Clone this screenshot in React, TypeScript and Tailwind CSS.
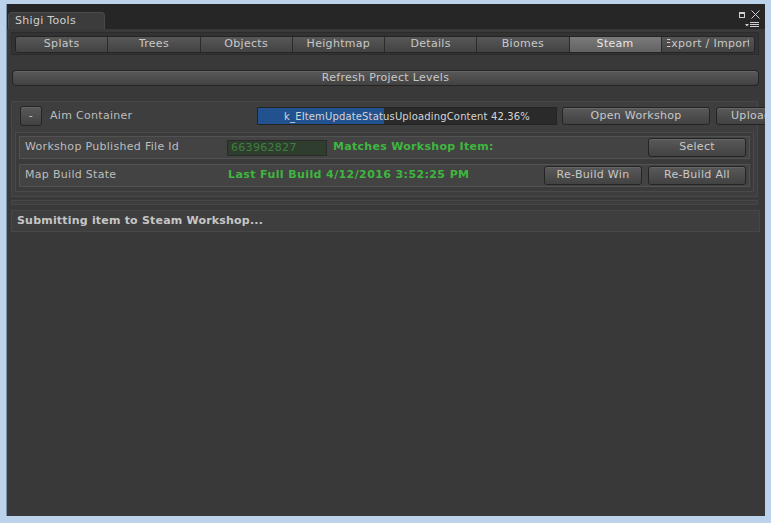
import React from 'react';

const tabs = ['Splats', 'Trees', 'Objects', 'Heightmap', 'Details', 'Biomes', 'Steam', 'Export / Import'];

const btn =
  'flex items-center justify-center shrink-0 rounded-[3px] border border-[#242424] bg-linear-to-b from-[#595959] to-[#424242] text-[#c8c8c8] shadow-[inset_0_1px_0_#666] whitespace-nowrap overflow-hidden';

const App = () => {
  return (
    <div className="w-[771px] h-[523px] bg-[#bcd2ea] pt-[4px] pl-[6px] font-['DejaVu_Sans',sans-serif] text-[11px] tracking-[0.3px]">
      <div className="w-[759px] h-[512px] bg-[#393939] flex flex-col overflow-hidden border-l border-[#7f93a8]">
        {/* header */}
        <div className="h-[25px] shrink-0 bg-[#262626] flex items-end pl-[1px]">
          <div className="w-[97px] h-[17px] rounded-t-[4px] bg-[#3c3c3c] border-t border-x border-[#4a4a4a] pl-[6px] text-[#cfcfcf] leading-[15px]">
            Shigi Tools
          </div>
          <div className="ml-auto mr-[5px] mb-[1px] flex flex-col items-end gap-[3px]">
            <div className="flex items-center gap-[6px]">
              <svg width="6" height="6" viewBox="0 0 6 6">
                <rect x="0.5" y="0.5" width="5" height="5" fill="none" stroke="#cfcfcf" />
                <rect x="0" y="0" width="6" height="2" fill="#cfcfcf" />
              </svg>
              <svg width="9" height="9" viewBox="0 0 9 9">
                <path d="M0.5 0.5 L8.5 8.5 M8.5 0.5 L0.5 8.5" stroke="#cfcfcf" strokeWidth="1" />
              </svg>
            </div>
            <svg width="15" height="6" viewBox="0 0 15 6">
              <path d="M0 2 L4 2 L2 4.5 Z" fill="#cfcfcf" />
              <rect x="5" y="0" width="9" height="1" fill="#cfcfcf" />
              <rect x="5" y="2" width="9" height="1" fill="#cfcfcf" />
              <rect x="5" y="4" width="9" height="1" fill="#cfcfcf" />
            </svg>
          </div>
        </div>

        {/* content */}
        <div className="flex flex-col pl-[4px] pt-[3px]">
          {/* toolbar */}
          <div className="w-[748px] h-[23px] border border-[#2c2c2c] bg-[#333] px-[3px] pt-[3px]">
            <div className="grid grid-cols-8 h-[17px] rounded-[3px] overflow-hidden border border-[#242424]">
              {tabs.map((t, i) => (
                <div
                  key={t}
                  className={
                    'flex items-center justify-center whitespace-nowrap overflow-hidden border-r border-[#2a2a2a] ' +
                    (t === 'Steam'
                      ? 'bg-linear-to-b from-[#7a7a7a] to-[#626262] text-[#e6e6e6]'
                      : 'bg-linear-to-b from-[#575757] to-[#434343] text-[#c8c8c8]') +
                    (i === 7 ? ' border-r-0' : '')
                  }
                >
                  <div className="max-w-[82px] flex justify-center overflow-hidden">
                    <span className="shrink-0">{t}</span>
                  </div>
                </div>
              ))}
            </div>
          </div>

          {/* refresh */}
          <div className={btn + ' ml-[1px] mt-[15px] w-[747px] h-[16px] rounded-[4px]'}>Refresh Project Levels</div>

          {/* box 1 */}
          <div className="mt-[15px] w-[747px] h-[96px] border border-[#474747] bg-[#3e3e3e] px-[3px]">
            <div className="h-[28px] flex items-center">
              <div className={btn + ' ml-[5px] w-[22px] h-[20px]'}>-</div>
              <div className="ml-[8px] w-[207px] shrink-0 text-[#bdbdbd]">Aim Container</div>
              <div className="relative shrink-0 w-[300px] h-[18px] bg-[#2a2a2a] border border-[#232323]">
                <div className="h-full w-[42.36%] bg-[#22518f]" />
                <div className="absolute inset-0 flex items-center justify-center text-[10px] tracking-[0.15px] text-[#d4d4d4] whitespace-nowrap">
                  k_EItemUpdateStatusUploadingContent 42.36%
                </div>
              </div>
              <div className={btn + ' ml-[5px] w-[148px] h-[18px]'}>Open Workshop</div>
              <div className={btn + ' ml-[6px] w-[148px] h-[18px] justify-start pl-[14px]'}>Upload</div>
            </div>

            <div className="mt-[2px] w-[739px] h-[60px] border border-[#4a4a4a] bg-[#3b3b3b] px-[3px] pt-[3px] flex flex-col gap-[5px]">
              <div className="h-[23px] border border-[#525252] bg-[#434343] flex items-center pl-[5px]">
                <div className="w-[202px] shrink-0 text-[#bdbdbd]">Workshop Published File Id</div>
                <div className="w-[100px] shrink-0 h-[16px] bg-[#2f3d2f] border border-[#2a2a2a] text-[#3f7f3f] pl-[3px] leading-[14px]">
                  663962827
                </div>
                <div className="ml-[6px] font-bold tracking-[0.3px] text-[#3fb63f] whitespace-nowrap">Matches Workshop Item:</div>
                <div className={btn + ' ml-auto mr-[3px] w-[98px] h-[19px]'}>Select</div>
              </div>
              <div className="h-[23px] border border-[#525252] bg-[#434343] flex items-center pl-[5px]">
                <div className="w-[203px] shrink-0 text-[#bdbdbd]">Map Build State</div>
                <div className="font-bold tracking-[0.4px] text-[#3fb63f] whitespace-nowrap">Last Full Build 4/12/2016 3:52:25 PM</div>
                <div className={btn + ' ml-auto w-[98px] h-[19px]'}>Re-Build Win</div>
                <div className={btn + ' ml-[6px] mr-[3px] w-[98px] h-[19px]'}>Re-Build All</div>
              </div>
            </div>
          </div>

          {/* thin bar */}
          <div className="mt-[3px] w-[747px] h-[5px] border border-[#474747] bg-[#3e3e3e]" />

          {/* status */}
          <div className="mt-[5px] w-[749px] h-[22px] border border-[#474747] bg-[#3e3e3e] flex items-center pl-[5px] font-bold tracking-[0.2px] text-[#c6c6c6]">
            Submitting item to Steam Workshop...
          </div>
        </div>
      </div>
    </div>
  );
};

export default App;
